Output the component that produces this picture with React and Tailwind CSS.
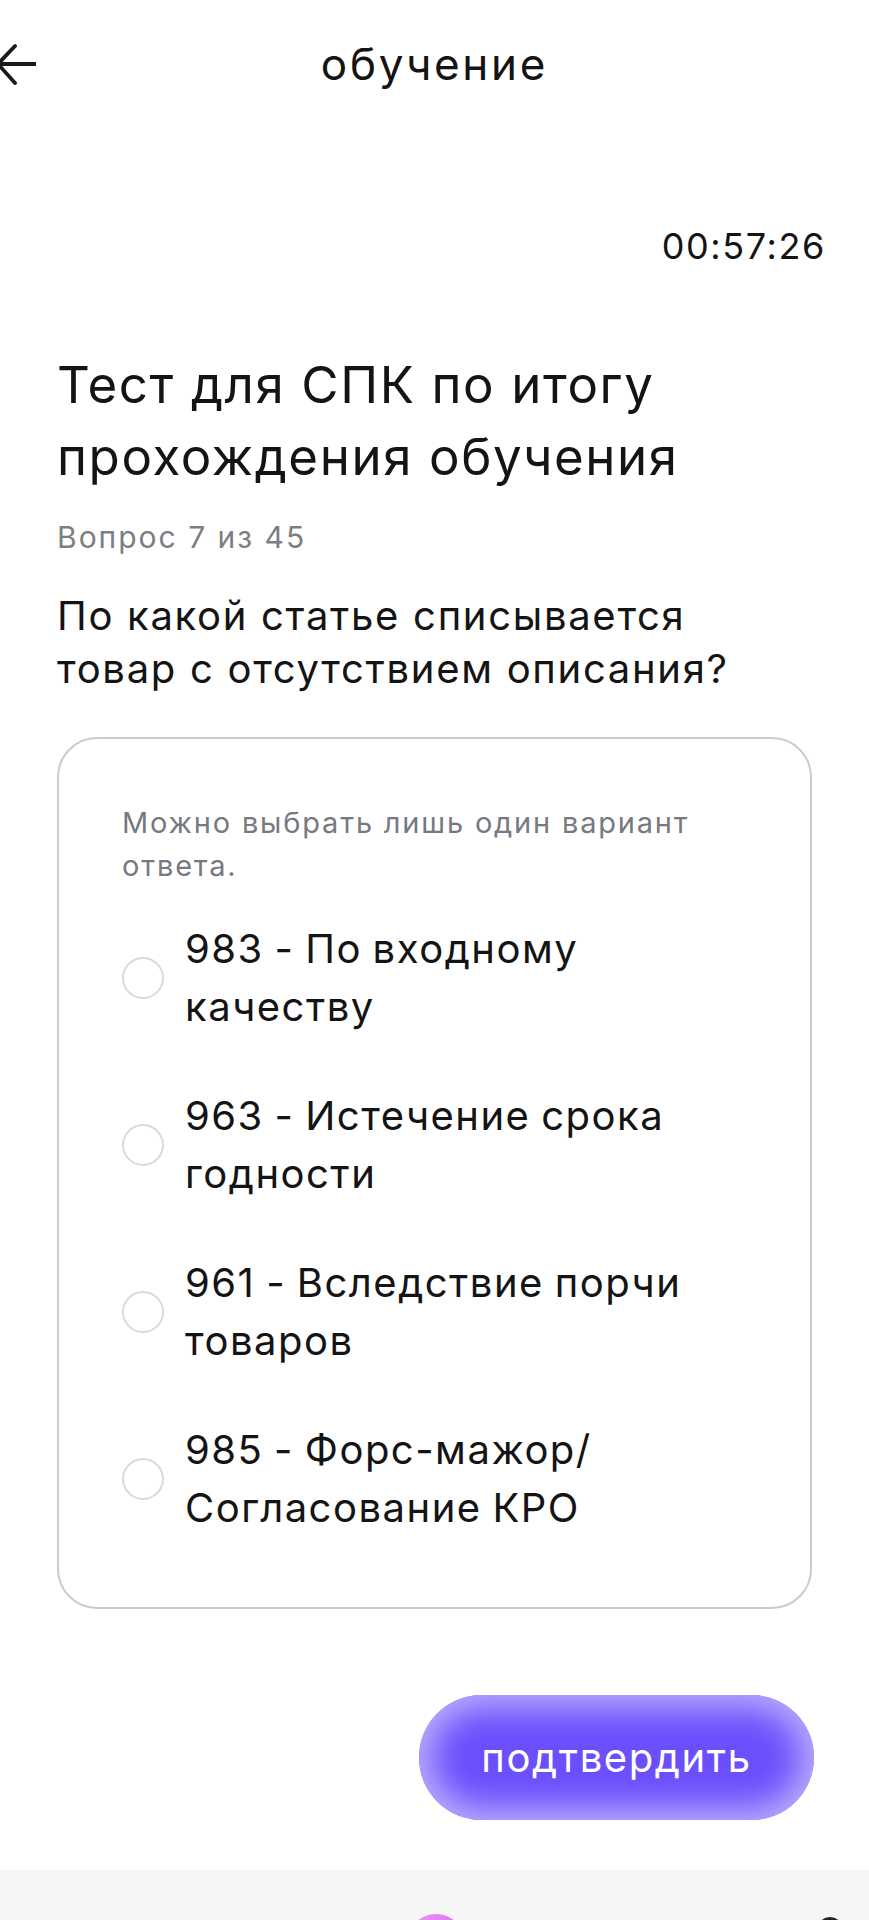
import React from "react";

const options = [
  ["983 - По входному", "качеству"],
  ["963 - Истечение срока", "годности"],
  ["961 - Вследствие порчи", "товаров"],
  ["985 - Форс-мажор/", "Согласование КРО"],
];

export default function App() {
  return (
    <div
      className="w-[869px] h-[1920px] bg-white text-[#141414] overflow-hidden flex flex-col"
      style={{ fontFamily: "Inter, 'Noto Sans', sans-serif" }}
    >
      {/* header */}
      <div className="pt-[40px] grid grid-cols-[1fr_auto_1fr] items-center">
        <div className="flex items-center">
          <svg
            width="40"
            height="44"
            viewBox="0 0 40 44"
            className="ml-[-4px]"
            fill="none"
            stroke="#1a1a1a"
            strokeWidth="3.8"
            strokeLinecap="round"
            strokeLinejoin="round"
          >
            <path d="M39 22 H3 M19 4 L2 22 L19 41" />
          </svg>
        </div>
        <div className="text-[44px] leading-[48px] tracking-[2.7px]">обучение</div>
        <div />
      </div>

      {/* timer */}
      <div className="mt-[138px] pr-[43px] flex justify-end text-[36px] leading-[40px] tracking-[1.6px]">
        00:57:26
      </div>

      <div className="px-[57px] flex flex-col">
        <h1 className="mt-[83px] text-[51px] leading-[72px] font-normal tracking-[1.6px]">
          Тест для СПК по итогу
          <br />
          прохождения обучения
        </h1>
        <div className="mt-[26px] text-[30px] leading-[36px] tracking-[2px] text-[#7b7e83]">
          Вопрос 7 из 45
        </div>
        <div className="mt-[34px] text-[40px] leading-[53px] tracking-[1.7px]">
          По какой статье списывается
          <br />
          товар с отсутствием описания?
        </div>

        {/* card */}
        <div className="mt-[42px] border-2 border-[#c9cbd0] rounded-[40px] pt-[62px] pb-[70px] pl-[63px] pr-[20px]">
          <div className="text-[29px] leading-[43px] tracking-[1.8px] text-[#767a80]">
            Можно выбрать лишь один вариант
            <br />
            ответа.
          </div>
          <div className="mt-[33px] flex flex-col gap-[51px]">
            {options.map((o, i) => (
              <div key={i} className="flex items-center gap-[21px]">
                <div className="w-[42px] h-[42px] rounded-full border-2 border-[#d9d9d9] shrink-0" />
                <div className="text-[40px] leading-[58px] tracking-[1.5px] [word-spacing:-2px] whitespace-nowrap">
                  {o[0]}
                  <br />
                  {o[1]}
                </div>
              </div>
            ))}
          </div>
        </div>

        {/* button */}
        <div className="mt-[86px] flex justify-end mr-[-2px]">
          <button className="w-[395px] h-[125px] rounded-full bg-[#6a4ffc] shadow-[inset_0_0_34px_12px_rgba(192,183,253,0.95)] text-white text-[40px] leading-none tracking-[1.6px] flex items-center justify-center">
            подтвердить
          </button>
        </div>
      </div>

      {/* bottom bar */}
      <div className="mt-[50px] h-[52px] bg-[#f6f6f7] overflow-hidden relative flex items-start pt-[44px]">
        <div className="ml-[407px] w-[58px] h-[58px] rounded-full bg-[linear-gradient(135deg,#f29af8,#c24cf0)] shrink-0" />
        <div className="ml-auto mr-[26px] mt-[3px] w-[26px] h-[26px] rounded-full border-[3px] border-[#222] shrink-0" />
      </div>
    </div>
  );
}
